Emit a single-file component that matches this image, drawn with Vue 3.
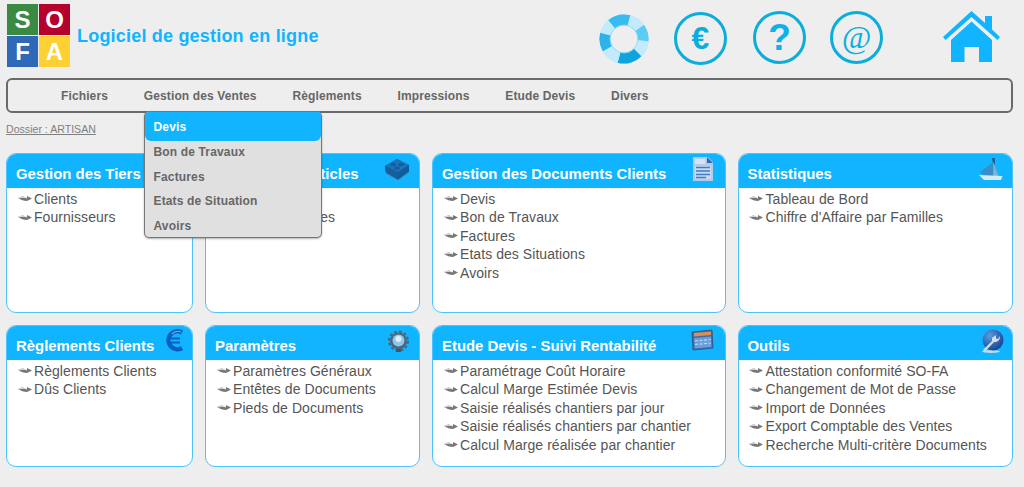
<template>
  <div class="page">
    <header class="top">
      <div class="brand">
        <div class="logo">
          <span class="s">S</span><span class="o">O</span><span class="f">F</span><span class="a">A</span>
        </div>
        <h1 class="tagline">Logiciel de gestion en ligne</h1>
      </div>
      <div class="tools">
        <svg class="buoy" viewBox="0 0 50 50" width="50" height="50">
          <circle cx="25" cy="25" r="24.5" fill="#8adcfa" />
          <circle
            v-for="s in buoy"
            :key="s.from"
            cx="25"
            cy="25"
            r="19"
            fill="none"
            pathLength="360"
            stroke-width="11"
            :stroke="s.color"
            :stroke-dasharray="`${s.to - s.from} 360`"
            :transform="`rotate(${s.from - 90} 25 25)`"
          />
          <circle cx="25" cy="25" r="13.5" fill="#eeeeee" />
          <circle cx="25" cy="25" r="14" fill="none" stroke="#8fdcf8" stroke-width="1" />
        </svg>
        <div class="ring euro">€</div>
        <div class="ring help">?</div>
        <div class="ring at">@</div>
        <svg class="home" viewBox="0 0 57 51" width="57" height="51">
          <path d="M0 26 L28.500 0 L42 12 V5 H49 V18.500 L57 26 L54.500 29 L28.500 6 L2.500 29 Z" fill="#10b4ff" />
          <path d="M8 29 L28.500 10.500 L49 29 V51 H36 V36 H21.500 V51 H8 Z" fill="#10b4ff" />
        </svg>
      </div>
    </header>

    <nav class="menu">
      <a v-for="m in menu" :key="m" class="menu-item">{{ m }}</a>
      <ul class="dropdown">
        <li v-for="(d, i) in dropdown" :key="d" :class="{ active: i === 0 }">{{ d }}</li>
      </ul>
    </nav>

    <a class="dossier">Dossier : ARTISAN</a>

    <main class="grid">
      <section v-for="c in cards" :key="c.title" class="card">
        <div class="card-head">
          <h2>{{ c.title }}</h2>
          <svg class="card-icon" viewBox="0 0 26 26" width="26" height="26" v-html="icons[c.icon]"></svg>
        </div>
        <ul class="card-list">
          <li v-for="l in c.links" :key="l">
            <svg class="arrow" viewBox="0 0 14 7" width="14" height="7">
              <path d="M0 3 C3 1 6 1 9 3 L9 1 L14 3.500 L9 6 C6 6 3 5 0 3 Z" fill="#777" />
              <path d="M1 3 C4 2 6 2 9 3" stroke="#fff" stroke-width="0.8" fill="none" />
            </svg>
            <span>{{ l }}</span>
          </li>
        </ul>
      </section>
    </main>
  </div>
</template>

<script setup>
const menu = ['Fichiers', 'Gestion des Ventes', 'Règlements', 'Impressions', 'Etude Devis', 'Divers']
const dropdown = ['Devis', 'Bon de Travaux', 'Factures', 'Etats de Situation', 'Avoirs']

// segments de la bouée, en degrés depuis le haut
const buoy = [
  { from: -40, to: 15, color: '#38bcf0' },
  { from: 15, to: 55, color: '#c4ebfb' },
  { from: 55, to: 95, color: '#5ccbf5' },
  { from: 95, to: 135, color: '#c4ebfb' },
  { from: 135, to: 195, color: '#0fa5dc' },
  { from: 195, to: 240, color: '#c4ebfb' },
  { from: 240, to: 285, color: '#2db2ea' },
  { from: 285, to: 320, color: '#c4ebfb' }
]

const icons = {
  brick: '<path d="M0 9 L12 2 L24 8 V15 L13 23 L1 16 Z" fill="#0d5c9c"/><path d="M0 9 L12 2 L24 8 L13 15 Z" fill="#1f74b8"/><path d="M1 16 L13 23 V15 L0 9 Z" fill="#145f9f"/><ellipse cx="8" cy="7.500" rx="3" ry="1.700" fill="#0f5f9f"/><ellipse cx="16" cy="7.500" rx="3" ry="1.700" fill="#0f5f9f"/><ellipse cx="12" cy="11" rx="3" ry="1.700" fill="#0f5f9f"/><path d="M1 16 L13 23 L24 15" fill="none" stroke="#5a7f9c" stroke-width="0.8"/>',
  doc: '<path d="M2 0 H17 L22 5 V24 H2 Z" fill="#b4cceb"/><path d="M16 0 L22 6 H16 Z" fill="#2b6cb4"/><path d="M4 2 H14 V7 H4 Z" fill="#d5e3f5"/><path d="M4 9 H20 V22 H4 Z" fill="#c9dbf2"/><path d="M5 10.500 H19 M5 14 H19 M5 17.500 H19 M5 20.500 H15" stroke="#3d7cc8" stroke-width="1.400"/>',
  sail: '<path d="M14 1 L17 1 L17 8 L15 8 Z" fill="#1f5f98"/><path d="M15.500 5 L20.500 19 L7 19 L2 15 Z" fill="#3a8ec8"/><path d="M15.500 5 L20.500 19 H15 Z" fill="#78b6d8"/><path d="M1 18 L24.500 19 L23 23 L6 23 Z" fill="#d3ecf4"/>',
  euro: '<path d="M24 3.500 A9 9 0 1 0 24 19" fill="none" stroke="#0c5fc2" stroke-width="4.500"/><path d="M10 9.500 H22 M10 13.500 H22" stroke="#0c5fc2" stroke-width="2"/><path d="M23 3 A8 8 0 0 0 14 5" fill="none" stroke="#6bb4ee" stroke-width="1.200"/>',
  gear: '<circle cx="13.500" cy="12" r="8.500" fill="#4f6679"/><circle cx="13.500" cy="12" r="9.500" fill="none" stroke="#4f6679" stroke-width="2" stroke-dasharray="2.800 2.200"/><circle cx="13.500" cy="11.500" r="6" fill="#8fc6ee"/><circle cx="13.500" cy="10" r="3" fill="#dceffc"/><path d="M11 20 H16 V23 H11 Z" fill="#3e566a"/>',
  board: '<path d="M1 3 L21 1 L22 19 L2 21 Z" fill="#3f6aa8" stroke="#2f4f80" stroke-width="0.800"/><path d="M3 4 L20 2.500 V6 L3 7.500 Z" fill="#d99055"/><path d="M3 9 L20 7.500 L20.500 18 L3.500 19.500 Z" fill="#6a9ddb"/><path d="M4 12 L20 10.500 M4 15.500 L20 14" stroke="#b8d6f2" stroke-width="1.200" stroke-dasharray="3 1.500"/>',
  globe: '<defs><radialGradient id="gl" cx="0.35" cy="0.3" r="0.8"><stop offset="0" stop-color="#5a9ce0"/><stop offset="1" stop-color="#0d3f8e"/></radialGradient></defs><ellipse cx="13" cy="22.500" rx="9" ry="1.500" fill="#c8dce4"/><circle cx="15" cy="11" r="10.500" fill="url(#gl)"/><path d="M5 21 L14 12 L14 9 L18 6 L18 9.500 L20 10 L22 7 C22 11 20 13 16 13 L7 22.500 Z" fill="#d7dee4"/>'
}

const cards = [
  { title: 'Gestion des Tiers', icon: 'brick', links: ['Clients', 'Fournisseurs'] },
  { title: 'Gestion des Articles', icon: 'brick', links: ['Articles', 'Familles Articles'] },
  { title: 'Gestion des Documents Clients', icon: 'doc', links: ['Devis', 'Bon de Travaux', 'Factures', 'Etats des Situations', 'Avoirs'] },
  { title: 'Statistiques', icon: 'sail', links: ['Tableau de Bord', 'Chiffre d\'Affaire par Familles'] },
  { title: 'Règlements Clients', icon: 'euro', links: ['Règlements Clients', 'Dûs Clients'] },
  { title: 'Paramètres', icon: 'gear', links: ['Paramètres Généraux', 'Entêtes de Documents', 'Pieds de Documents'] },
  { title: 'Etude Devis - Suivi Rentabilité', icon: 'board', links: ['Paramétrage Coût Horaire', 'Calcul Marge Estimée Devis', 'Saisie réalisés chantiers par jour', 'Saisie réalisés chantiers par chantier', 'Calcul Marge réalisée par chantier'] },
  { title: 'Outils', icon: 'globe', links: ['Attestation conformité SO-FA', 'Changement de Mot de Passe', 'Import de Données', 'Export Comptable des Ventes', 'Recherche Multi-critère Documents'] }
]
</script>

<style>
html, body {
  margin: 0;
  background: #eeeeee;
  overflow: hidden;
}
</style>

<style scoped>
.page {
  width: 1024px;
  height: 487px;
  box-sizing: border-box;
  padding: 4px 11px 0 6px;
  font-family: "Liberation Sans", Arial, sans-serif;
  color: #555;
}
.top {
  display: flex;
  justify-content: space-between;
  height: 74px;
}
.brand {
  display: flex;
  align-items: flex-start;
  gap: 7px;
  padding-left: 1px;
}
.logo {
  display: grid;
  grid-template-columns: 31px 31px;
  grid-template-rows: 31px 31px;
  gap: 1px;
}
.logo span {
  display: flex;
  align-items: center;
  justify-content: center;
  color: #fff;
  font-weight: bold;
  font-size: 24px;
}
.logo .s { background: #3a8a44; }
.logo .o { background: #b5022c; }
.logo .f { background: #2f68b6; }
.logo .a { background: #fdd034; }
.tagline {
  margin: 22px 0 0;
  font-size: 18px;
  letter-spacing: 0.2px;
  font-weight: bold;
  color: #10b4ff;
}
.tools {
  display: flex;
  align-items: flex-start;
  padding-top: 7px;
  padding-right: 13px;
}
.buoy { margin-top: 3px; margin-right: 25px; }
.ring {
  box-sizing: border-box;
  width: 53px;
  height: 53px;
  border: 3px solid #0aaedc;
  border-radius: 50%;
  color: #0aaedc;
  display: flex;
  align-items: center;
  justify-content: center;
}
.euro { font-size: 32px; font-weight: bold; margin-top: 1px; margin-right: 26px; }
.help { font-size: 37px; font-weight: bold; color: #10b0e8; margin-right: 24px; }
.at { font-family: "Liberation Serif", serif; font-style: italic; font-size: 32px; margin-right: 60px; }
.menu {
  position: relative;
  display: flex;
  align-items: center;
  box-sizing: border-box;
  height: 35px;
  border: 2px solid #6a6a6a;
  border-radius: 6px;
  padding-left: 53px;
  gap: 35.8px;
}
.menu-item {
  font-size: 12px;
  letter-spacing: 0.12px;
  font-weight: bold;
  color: #666;
}
.dropdown {
  position: absolute;
  left: 136px;
  top: 31px;
  z-index: 5;
  width: 178px;
  box-sizing: border-box;
  margin: 0;
  padding: 0;
  list-style: none;
  background: #e0e0e0;
  border: 1px solid #777;
  border-radius: 5px;
  box-shadow: 0 1px 2px rgba(0, 0, 0, 0.3);
}
.dropdown li {
  height: 24.6px;
  line-height: 22px;
  padding-left: 8.5px;
  font-size: 12px;
  letter-spacing: 0.15px;
  font-weight: bold;
  color: #666;
}
.dropdown li:last-child {
  height: 22px;
}
.dropdown li.active {
  height: 29px;
  line-height: 30px;
  background: #10b4ff;
  color: #fff;
  border-radius: 4px 4px 6px 6px;
}
.dossier {
  display: block;
  margin-top: 10px;
  height: 30px;
  font-size: 10.6px;
  color: #808080;
  text-decoration: underline;
}
.grid {
  display: grid;
  grid-template-columns: 187px 215px 293.5px 275px;
  grid-template-rows: 160px 142px;
  column-gap: 12px;
  row-gap: 12px;
}
.card {
  box-sizing: border-box;
  background: #fff;
  border: 1px solid #4cc3fc;
  border-radius: 10px;
  overflow: hidden;
}
.card-head {
  position: relative;
  height: 34px;
  background: #10b4ff;
  display: flex;
  align-items: center;
  padding-left: 9px;
}
.card-head h2 {
  margin: 5px 0 0;
  font-size: 14.9px;
  font-weight: bold;
  color: #fff;
  white-space: nowrap;
}
.card-icon {
  position: absolute;
  right: 8px;
  top: 3px;
}
.card-list {
  margin: 0;
  padding: 1.7px 0 0 10.5px;
  list-style: none;
}
.card-list li {
  display: flex;
  align-items: center;
  gap: 2.5px;
  height: 18.5px;
  line-height: 18.5px;
  font-size: 14px;
  letter-spacing: 0.06px;
  color: #555;
  white-space: nowrap;
}
</style>
